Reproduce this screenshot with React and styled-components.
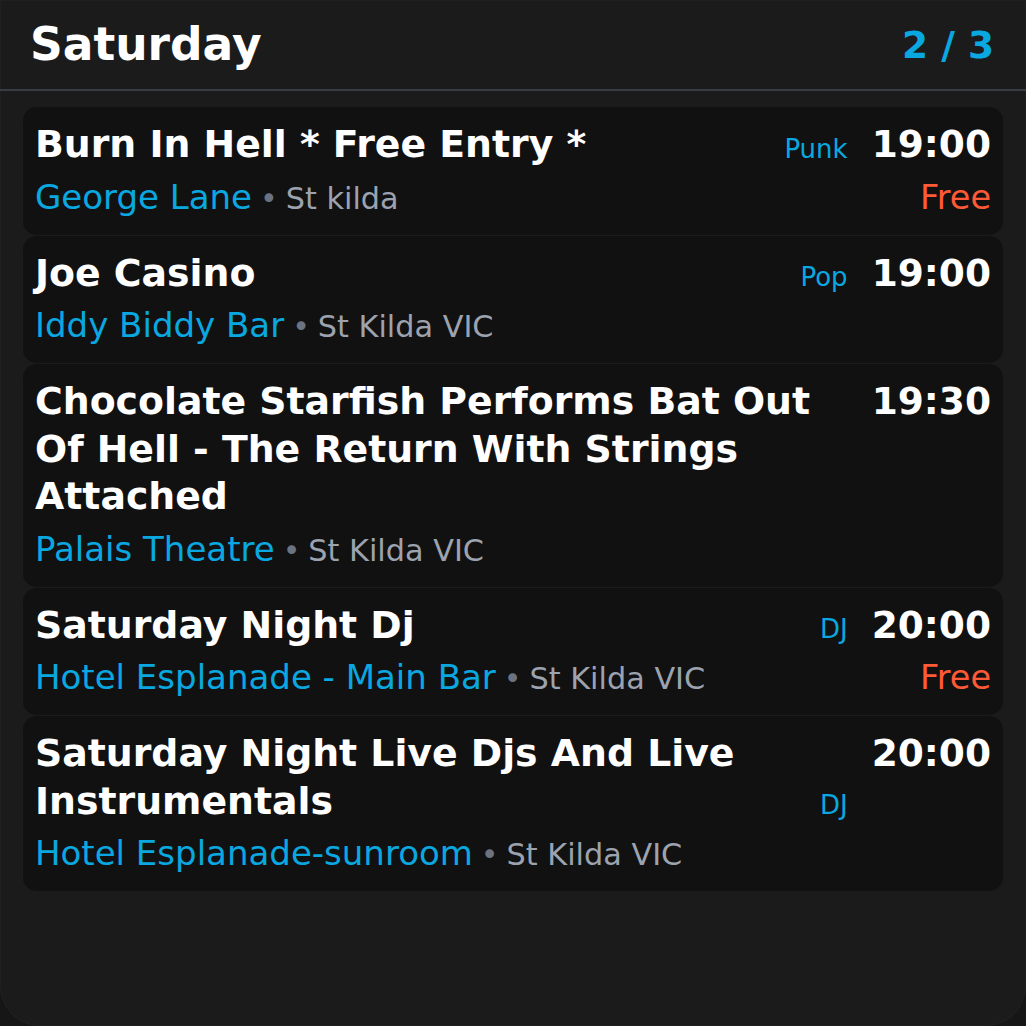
import React from "react";
import styled, { createGlobalStyle } from "styled-components";

const events = [
  {
    title: "Burn In Hell * Free Entry *",
    genre: "Punk",
    time: "19:00",
    venue: "George Lane",
    place: "St kilda",
    free: true,
  },
  {
    title: "Joe Casino",
    genre: "Pop",
    time: "19:00",
    venue: "Iddy Biddy Bar",
    place: "St Kilda VIC",
  },
  {
    title:
      "Chocolate Starfish Performs Bat Out Of Hell - The Return With Strings Attached",
    time: "19:30",
    venue: "Palais Theatre",
    place: "St Kilda VIC",
  },
  {
    title: "Saturday Night Dj",
    genre: "DJ",
    time: "20:00",
    venue: "Hotel Esplanade - Main Bar",
    place: "St Kilda VIC",
    free: true,
  },
  {
    title: "Saturday Night Live Djs And Live Instrumentals",
    genre: "DJ",
    time: "20:00",
    venue: "Hotel Esplanade-sunroom",
    place: "St Kilda VIC",
  },
];

const App = () => {
  return (
    <>
      <GlobalStyle />
      <Panel>
        <Header>
          <DayTitle>Saturday</DayTitle>
          <PageCount>2 / 3</PageCount>
        </Header>
        <List>
          {events.map((event, i) => (
            <Card key={i}>
              <TopRow>
                <EventTitle>{event.title}</EventTitle>
                {event.genre && <Genre>{event.genre}</Genre>}
                <Time>{event.time}</Time>
              </TopRow>
              <BottomRow>
                <Where>
                  <Venue>{event.venue}</Venue>
                  <Dot>•</Dot>
                  <Place>{event.place}</Place>
                </Where>
                {event.free && <Price>Free</Price>}
              </BottomRow>
            </Card>
          ))}
        </List>
      </Panel>
    </>
  );
};

const GlobalStyle = createGlobalStyle`
  html, body {
    margin: 0;
    padding: 0;
    background: #161616;
  }

  body {
    font-family: "DejaVu Sans", Verdana, sans-serif;
  }
`;

const Panel = styled.div`
  background: #1b1b1b;
  border-radius: 0 0 40px 40px;
  box-shadow: inset 0 0 0 1px #202020;
  height: 1026px;
  overflow: hidden;
  width: 1026px;
`;

const Header = styled.div`
  align-items: center;
  border-bottom: 2px solid #373c45;
  box-sizing: border-box;
  display: flex;
  height: 91px;
  justify-content: space-between;
  padding: 0 32px 0 30px;
`;

const DayTitle = styled.h1`
  color: #ffffff;
  font-size: 45.5px;
  font-weight: 700;
  margin: 0;
`;

const PageCount = styled.div`
  color: #0aa8e0;
  font-size: 37.5px;
  font-weight: 700;
`;

const List = styled.div`
  display: flex;
  flex-direction: column;
  gap: 1px;
  padding: 16px 23px 0;
`;

const Card = styled.div`
  background: #111111;
  border-radius: 14px;
  display: flex;
  flex-direction: column;
  gap: 7px;
  padding: 14px 12px 16px;
`;

const TopRow = styled.div`
  align-items: flex-end;
  display: flex;
`;

const EventTitle = styled.div`
  color: #ffffff;
  flex: 1;
  font-size: 37.8px;
  font-weight: 700;
  line-height: 47.5px;
  padding-right: 24px;
`;

const Genre = styled.div`
  color: #0aa8e0;
  font-size: 26px;
  line-height: 34px;
  margin-right: 24px;
  padding-bottom: 3px;
`;

const Time = styled.div`
  align-self: flex-start;
  color: #ffffff;
  font-size: 37.5px;
  font-weight: 700;
  line-height: 47.5px;
`;

const BottomRow = styled.div`
  align-items: baseline;
  display: flex;
  height: 43px;
  justify-content: space-between;
  line-height: 43px;
`;

const Where = styled.div`
  align-items: baseline;
  display: flex;
  gap: 8px;
`;

const Venue = styled.span`
  color: #0aa8e0;
  font-size: 34px;
`;

const Dot = styled.span`
  color: #6b7280;
  font-size: 30px;
`;

const Place = styled.span`
  color: #9ca3af;
  font-size: 30.3px;
`;

const Price = styled.span`
  color: #ff5a36;
  font-size: 33.5px;
`;

export default App;
